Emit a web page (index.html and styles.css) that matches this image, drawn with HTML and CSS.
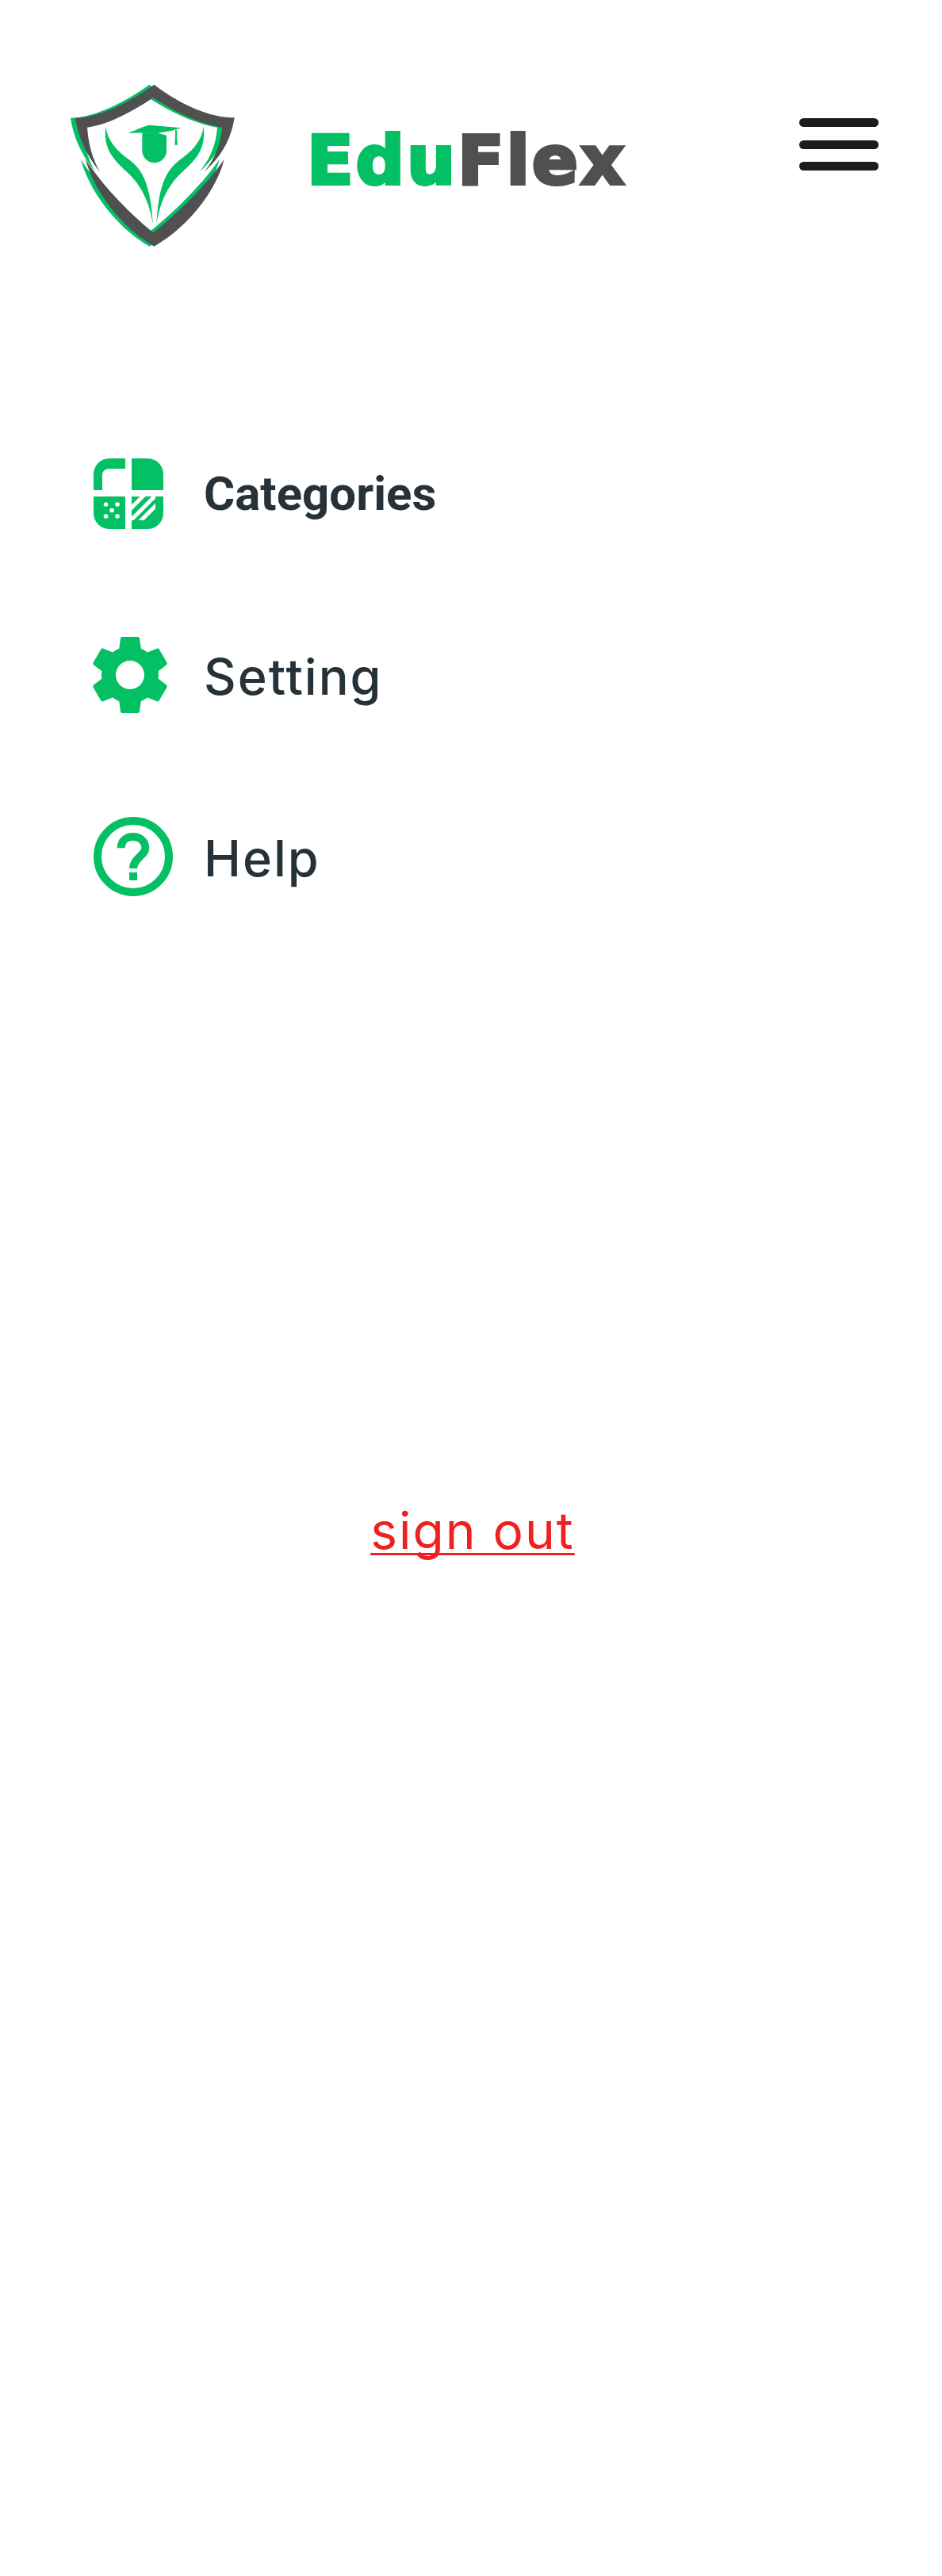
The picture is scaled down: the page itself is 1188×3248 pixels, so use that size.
FILE: index.html
```html
<!DOCTYPE html>
<html lang="en">
<head>
<meta charset="utf-8">
<title>EduFlex</title>
<link rel="stylesheet" href="styles.css">
</head>
<body>
<header class="header">
  <svg class="logo" viewBox="0 0 780 780" aria-hidden="true">
    <defs>
      <g id="shield">
        <path d="M403 80C480 140 600 205 707 205C695 280 665 345 593 410C640 350 655 300 660 242C560 225 470 175 400 130C330 175 240 230 150 242C155 300 165 350 198 410C145 345 115 275 105 206C200 205 320 140 403 80Z"/>
        <path d="M143 362C200 450 300 560 400 640C500 560 610 450 668 362C640 480 530 620 403 692C280 620 180 490 143 362Z"/>
      </g>
    </defs>
    <use href="#shield" class="logo-green" transform="translate(-18 0)"/>
    <use href="#shield" class="logo-grey"/>
    <g class="logo-green">
      <path d="M220 238C225 290 260 330 310 365C365 405 390 470 398 605C385 530 360 465 300 410C245 360 210 320 220 238Z"/>
      <path d="M590 238C585 290 550 330 500 365C445 405 420 470 412 605C425 530 450 465 510 410C565 360 600 320 590 238Z"/>
      <path d="M303 264C340 250 360 238 385 233L505 244L470 254L415 264C385 262 340 262 303 264Z"/>
      <path d="M358 262H412L450 272V330A46 46 0 0 1 358 330Z"/>
      <path d="M483 252H489V282L492 308H481L483 282Z"/>
    </g>
  </svg>
  <div class="brand"><span class="brand-edu">Edu</span><span class="brand-flex">Flex</span></div>
  <button class="menu" type="button" aria-label="Menu"><span></span><span></span><span></span></button>
</header>
<nav class="nav">
  <a class="nav-item nav-item-active">
    <svg class="icon icon-cat" viewBox="0 0 88 89" aria-hidden="true">
      <defs><clipPath id="stripe-clip"><rect x="48" y="48" width="30" height="30"/></clipPath></defs>
      <path class="fill" d="M40 0H20A20 20 0 0 0 0 20V40H11V21A8 8 0 0 1 19 13H40Z"/>
      <path class="fill" d="M48 0H68A20 20 0 0 1 88 20V40H48Z"/>
      <path class="fill" d="M0 48H40V89H20A20 20 0 0 1 0 69Z"/>
      <path class="fill" d="M48 48H88V69A20 20 0 0 1 68 89H48Z"/>
      <g class="dots"><circle cx="15.5" cy="58" r="2.8"/><circle cx="30" cy="58" r="2.8"/><circle cx="23" cy="65.5" r="2.8"/><circle cx="15.5" cy="73" r="2.8"/><circle cx="30" cy="73" r="2.8"/></g>
      <g class="stripes" clip-path="url(#stripe-clip)"><path d="M40 70L70 40"/><path d="M40 85L85 40"/><path d="M50 88L90 48"/></g>
    </svg>
    <span>Categories</span>
  </a>
  <a class="nav-item">
    <svg class="icon icon-gear" viewBox="2.6 2.4 18.8 19.2" aria-hidden="true"><path class="fill" d="M19.14 12.94c.04-.3.06-.61.06-.94 0-.32-.02-.64-.07-.94l2.03-1.58c.18-.14.23-.41.12-.61l-1.92-3.32c-.12-.22-.37-.29-.59-.22l-2.39.96c-.5-.38-1.03-.7-1.62-.94l-.36-2.54c-.04-.24-.24-.41-.48-.41h-3.84c-.24 0-.43.17-.47.41l-.36 2.54c-.59.24-1.13.57-1.62.94l-2.39-.96c-.22-.08-.47 0-.59.22L2.74 8.87c-.12.21-.08.47.12.61l2.03 1.58c-.05.3-.09.63-.09.94s.02.64.07.94l-2.03 1.58c-.18.14-.23.41-.12.61l1.92 3.32c.12.22.37.29.59.22l2.39-.96c.5.38 1.03.7 1.62.94l.36 2.54c.05.24.24.41.48.41h3.84c.24 0 .44-.17.47-.41l.36-2.54c.59-.24 1.13-.56 1.62-.94l2.39.96c.22.08.47 0 .59-.22l1.92-3.32c.12-.22.07-.47-.12-.61l-2.01-1.58zM12 15.6c-1.98 0-3.6-1.62-3.6-3.6s1.62-3.6 3.6-3.6 3.6 1.62 3.6 3.6-1.62 3.6-3.6 3.6z"/></svg>
    <span>Setting</span>
  </a>
  <a class="nav-item">
    <svg class="icon icon-help" viewBox="54 720 300 300" aria-hidden="true">
      <circle class="ring" cx="204" cy="870" r="135"/>
      <path class="ring" d="M158 838C158 810 178 795 204 795C232 795 250 815 250 838C250 865 205 875 204 915"/>
      <rect class="fill" x="189" y="930" width="30" height="30"/>
    </svg>
    <span>Help</span>
  </a>
</nav>
<div class="signout-wrap"><a class="signout" href="#">sign out</a></div>
</body>
</html>
```
FILE: styles.css
```css
html, body { margin: 0; padding: 0; background: #fff; }
body { height: 3248px; overflow: hidden; font-family: "Inter", "Noto Sans", sans-serif; color: #263238; }

.header { display: flex; align-items: flex-start; padding: 80px 0 0 60px; height: 260px; }
.logo { width: 260px; height: 260px; flex: none; }
.logo-green { fill: #04c064; }
.logo-grey { fill: #505050; }
.brand { margin: 71.5px 0 0 67px; font-family: "DejaVu Sans", sans-serif; font-weight: 700; font-size: 86px; line-height: 100px; letter-spacing: 2.8px; -webkit-text-stroke: 4px currentColor; white-space: nowrap; }
.brand-edu { color: #04c064; }
.brand-flex { color: #505050; }
.menu { margin: 69px 80px 0 auto; padding: 0; border: 0; background: none; width: 100px; display: flex; flex-direction: column; gap: 16.5px; }
.menu span { display: block; height: 11px; border-radius: 6px; background: #1c1c20; }

.nav { display: flex; flex-direction: column; padding: 232px 0 0 118px; }
.nav-item { display: flex; align-items: center; height: 100px; margin-bottom: 129px; font-size: 63px; font-weight: 500; letter-spacing: 2px; color: #263238; }
.nav-item span { margin-top: 3px; }
.nav-item-active { font-family: "Roboto", sans-serif; font-weight: 700; font-size: 60px; letter-spacing: 0; }
.nav-item-active span { margin-top: 0; }
.icon { flex: none; }
.icon-cat { width: 88px; height: 89px; margin-right: 51px; }
.icon-gear { width: 94px; height: 96px; margin-left: -1px; margin-right: 46px; }
.icon-help { width: 100px; height: 100px; margin-right: 39px; }
.fill { fill: #04c064; }
.ring { fill: none; stroke: #04c064; stroke-width: 30; }
.dots { fill: #fff; }
.stripes { fill: none; stroke: #fff; stroke-width: 5; }

.signout-wrap { display: flex; justify-content: center; padding: 631px 0 0 4px; }
.signout { font-size: 64px; letter-spacing: 2px; line-height: 80px; color: #f02020; text-decoration: underline; text-decoration-thickness: 3px; text-underline-offset: 5px; text-decoration-skip-ink: none; }
```
